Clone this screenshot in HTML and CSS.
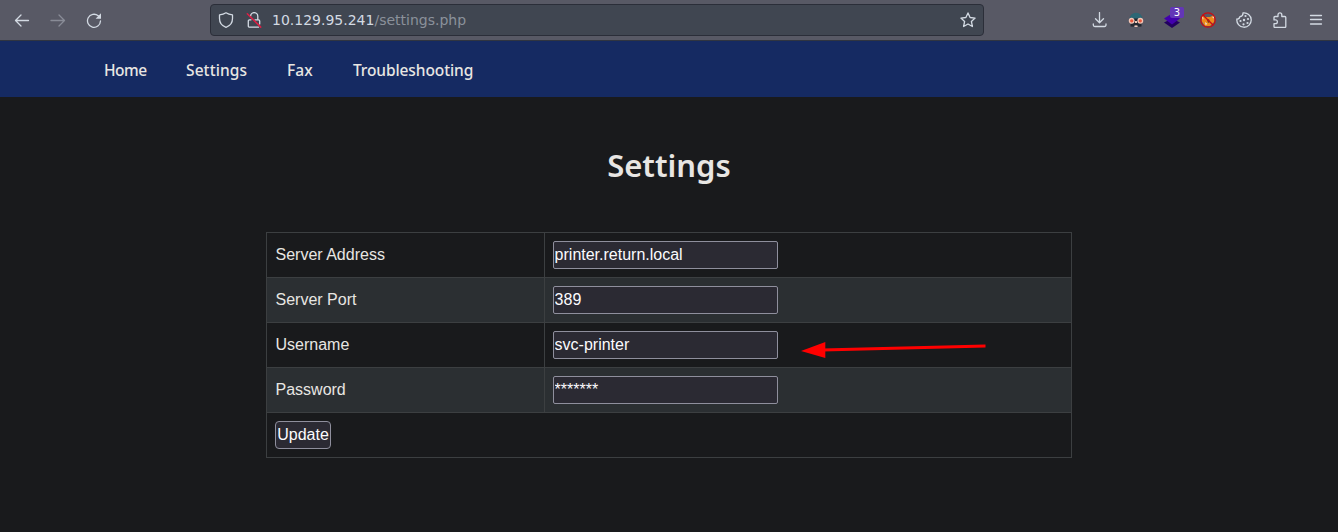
FILE: index.html
```html
<!DOCTYPE html>
<html lang="en">
<head>
<meta charset="utf-8">
<title>Settings</title>
<link rel="stylesheet" href="styles.css">
</head>
<body>
<header class="toolbar">
  <div class="nav-buttons">
    <svg class="icon" viewBox="0 0 16 16"><path d="M14.500 8.500H1.500M7 3L1.500 8.500L7 14"/></svg>
    <svg class="icon dim" viewBox="0 0 16 16"><path d="M1 8.500H14.500M9 3L14.500 8.500L9 14"/></svg>
    <svg class="icon" viewBox="0 0 16 16"><path d="M14.500 9A6.500 6.500 0 1 1 12.200 3.800L13.400 4.800"/><path class="solid" d="M15 1.300v5.400H9.600z"/></svg>
  </div>
  <div class="urlbar">
    <svg class="icon" viewBox="0 0 16 16"><path d="M8 .8C6.300 2 4 2.700 1.500 2.900V6.500C1.500 11 4.300 14 8 15.300C11.700 14 14.500 11 14.500 6.500V2.900C12 2.700 9.700 2 8 .8Z"/></svg>
    <svg class="icon lock" viewBox="0 0 16 16"><path d="M4.600 4.200a3.600 3.600 0 0 1 7.200 0V7M9 7.800h3.500a1.200 1.200 0 0 1 1.200 1.200v3M12.500 15.200h-9A1.200 1.200 0 0 1 2.300 14V9a1.200 1.200 0 0 1 1.200-1.200H5"/><path class="slash" d="M1.300 1.700L14.700 15.100"/></svg>
    <div class="url"><span class="host">10.129.95.241</span>/settings.php</div>
    <svg class="icon" viewBox="0 0 16 16"><path d="M8 .9l2.100 4.600 5 .6-3.700 3.400 1 5L8 12l-4.400 2.500 1-5L.9 6.100l5-.6z"/></svg>
  </div>
  <div class="extensions">
    <svg class="icon" viewBox="0 0 16 16"><path d="M7.500 .5V10.500M3.500 6.700L7.500 10.800L11.500 6.700M1.300 12V13a1.500 1.500 0 0 0 1.500 1.500H12.500a1.500 1.500 0 0 0 1.500-1.500V12"/></svg>
    <svg class="glyph" viewBox="0 0 16 16"><path fill="#2c6775" d="M1.500 7.500Q2 .8 8 .8T14.500 7.500v2h-13z"/><path fill="#242831" d="M2.500 9h11v5.500l-3 .3-2.500-2-2.500 2-3-.3zM6 6.500h4v4H6z"/><circle cx="3.700" cy="8.800" r="2.300" fill="#e9583d" stroke="#f2c5b5" stroke-width="1.300"/><circle cx="12.300" cy="8.800" r="2.300" fill="#e9583d" stroke="#f2c5b5" stroke-width="1.300"/><path fill="#f0c7b8" d="M7 9h2v2H7zM6.500 13.500h3V15h-3z"/></svg>
    <span class="stack">
      <svg class="glyph" viewBox="0 0 16 16"><path fill="#220060" d="M0 10.500l8-4 8 4-8 5.500z"/><path fill="#4200ad" d="M0 6.500l8-5 8 5-8 6z"/></svg>
      <span class="badge">3</span>
    </span>
    <svg class="glyph" viewBox="0 0 16 16"><path fill="#ee8b1c" d="M2 3l4 2h4l4-2 .5 6.500L10 14H5L1.500 9z"/><path fill="#eadfd2" d="M1.500 4l2 2-.5 2zM5 10l2.500 2-2 1zM12 5l2.500-1v3z"/><path fill="#614421" d="M7 8l2-1 1 3-2 1z"/><path d="M2.700 2.700L13.300 13.300" stroke="#c80c13" stroke-width="1.300"/><circle cx="8" cy="8" r="7.200" fill="none" stroke="#c80c13" stroke-width="1.300"/></svg>
    <svg class="icon" viewBox="0 0 16 16"><path d="M7 .9A7.200 7.200 0 1 1 .9 7Q3.400 7.300 3.900 4.700Q7.200 4.400 7 .9z"/><g class="solid"><circle cx="9.500" cy="4" r="1.100"/><circle cx="12" cy="7" r="1.100"/><circle cx="8" cy="8" r="1.200"/><circle cx="4.500" cy="9" r="1.100"/><circle cx="11.500" cy="11" r="1.100"/><circle cx="7.500" cy="12.300" r="1.100"/></g></svg>
    <svg class="icon" viewBox="0 0 16 16"><path d="M2 7.500V5.500a1 1 0 0 1 1-1H6V2.700a1.900 1.900 0 0 1 3.800 0V4.500h3a1 1 0 0 1 1 1v9a1 1 0 0 1-1 1H3a1 1 0 0 1-1-1V11.700H3.500a1.900 1.900 0 0 0 0-3.800H2z"/></svg>
    <svg class="icon" viewBox="0 0 16 16"><path d="M2.500 3.500H13.500M2.500 7.500H13.500M2.500 12H13.500"/></svg>
  </div>
</header>
<nav class="menu">
  <a class="home">Home</a><a class="settings">Settings</a><a class="fax">Fax</a><a class="trouble">Troubleshooting</a>
</nav>
<main class="page">
  <h1 class="title">Settings</h1>
  <table class="form">
    <tr><td class="label">Server Address</td><td><input class="field" type="text" value="printer.return.local"></td></tr>
    <tr class="alt"><td class="label">Server Port</td><td><input class="field" type="text" value="389"></td></tr>
    <tr><td class="label">Username</td><td><input class="field" type="text" value="svc-printer"></td></tr>
    <tr class="alt"><td class="label">Password</td><td><input class="field" type="text" value="*******"></td></tr>
    <tr><td colspan="2"><button class="update">Update</button></td></tr>
  </table>
</main>
<svg class="arrow" viewBox="0 0 186 20"><path d="M22 10L185.500 6" stroke="#f00" stroke-width="3"/><path d="M1 11L25.300 2V18z" fill="#f00"/></svg>
</body>
</html>
```
FILE: styles.css
```css
* { box-sizing: border-box; }
body {
  margin: 0;
  height: 532px;
  overflow: hidden;
  position: relative;
  background: #191a1c;
  color: #e8e6e3;
  font: 16px/28px "Liberation Sans", Arial, sans-serif;
}
.toolbar {
  display: flex;
  align-items: center;
  height: 41px;
  padding-right: 14px;
  background: #585965;
  border-bottom: 1px solid #303540;
}
.nav-buttons { display: flex; gap: 20px; width: 210px; padding-left: 14px; }
.icon {
  display: block;
  width: 16px;
  height: 16px;
  flex: none;
  fill: none;
  stroke: #d3dae3;
  stroke-width: 1.3;
  stroke-linecap: round;
  stroke-linejoin: round;
}
.dim { opacity: .4; }
.icon .solid { fill: #d3dae3; stroke: none; }
.slash { stroke: #dd1f45; stroke-width: 1.5; }
.urlbar {
  display: flex;
  align-items: center;
  width: 774px;
  height: 32px;
  padding: 0 7px;
  background: #404651;
  border: 1px solid #2b2e39;
  border-radius: 4px;
}
.lock { margin-left: 12px; }
.url {
  flex: 1;
  margin-left: 10px;
  color: #8b919b;
  font: 14px/28px "DejaVu Sans", sans-serif;
}
.host { color: #d3dae3; }
.extensions { display: flex; align-items: center; gap: 20px; margin-left: auto; }
.glyph { display: block; width: 16px; height: 16px; flex: none; }
.stack { position: relative; width: 16px; height: 16px; }
.badge {
  position: absolute;
  left: 6px;
  top: -5px;
  width: 14px;
  height: 11px;
  border-radius: 2px;
  background: #6336b7;
  color: #fff;
  font: 10px/11px "DejaVu Sans", sans-serif;
  text-align: center;
}
.menu {
  display: flex;
  gap: 40px;
  height: 56px;
  padding-left: 104px;
  background: #152a62;
  font: 500 15.5px/59px "Noto Sans", sans-serif;
  white-space: nowrap;
}
.home { width: 42px; letter-spacing: -.5px; }
.settings { width: 61px; letter-spacing: .1px; }
.fax { width: 26px; letter-spacing: .1px; }
.trouble { letter-spacing: -.1px; }
.page { display: flex; flex-direction: column; align-items: center; }
.title {
  margin: 45px 0 43px;
  font: 600 31px/47px "Noto Sans", sans-serif;
}
.form { width: 806px; border-collapse: collapse; table-layout: fixed; }
.form td { height: 45px; padding: 8px; border: 1px solid #3c3f41; }
.form .label { width: 278px; padding-left: 8.5px; }
.alt { background: #2b2f32; }
.field {
  display: block;
  width: 225px;
  height: 28px;
  padding: 0 .6px;
  background: #2b2a33;
  border: 1px solid #8f8f9d;
  border-radius: 2px;
  color: #fbfbfe;
  font: inherit;
}
.update {
  display: block;
  width: 56px;
  height: 28px;
  padding: 0;
  background: #2b2a33;
  border: 1px solid #8f8f9d;
  border-radius: 4px;
  color: #fbfbfe;
  font: 16px/26px "Liberation Sans", Arial, sans-serif;
}
.arrow { position: absolute; left: 800px; top: 340px; width: 186px; height: 20px; }
```
